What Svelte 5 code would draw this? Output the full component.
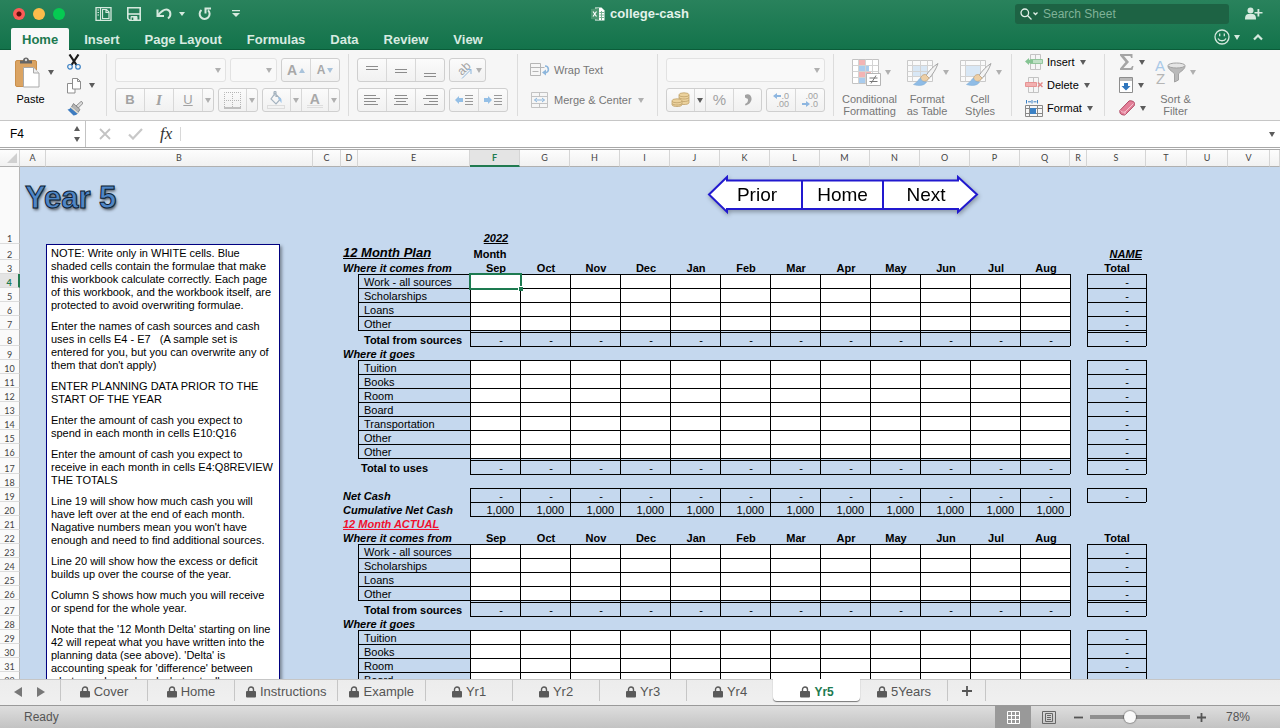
<script lang="ts">
  type Row = {
    n: number;
    kind: 'year' | 'title' | 'months' | 'item' | 'total' | 'heading' | 'blank' | 'net' | 'cumulative' | 'actual';
    label?: string;
  };

  const months = ['Sep', 'Oct', 'Nov', 'Dec', 'Jan', 'Feb', 'Mar', 'Apr', 'May', 'Jun', 'Jul', 'Aug'];
  const columns = 'ABCDEFGHIJKLMNOPQRSTUV'.split('');
  const widths = [26, 267, 28, 17, 112, 50, 50, 50, 50, 50, 50, 50, 50, 50, 50, 50, 50, 17, 59, 41, 41, 42];
  const ribbonTabs = ['Home', 'Insert', 'Page Layout', 'Formulas', 'Data', 'Review', 'View'];
  const sheets = ['Cover', 'Home', 'Instructions', 'Example', 'Yr1', 'Yr2', 'Yr3', 'Yr4', 'Yr5', '5Years'];

  const rows: Row[] = [
    { n: 1, kind: 'year' },
    { n: 2, kind: 'title', label: '12 Month Plan' },
    { n: 3, kind: 'months', label: 'Where it comes from' },
    { n: 4, kind: 'item', label: 'Work - all sources' },
    { n: 5, kind: 'item', label: 'Scholarships' },
    { n: 6, kind: 'item', label: 'Loans' },
    { n: 7, kind: 'item', label: 'Other' },
    { n: 8, kind: 'total', label: 'Total from sources' },
    { n: 9, kind: 'heading', label: 'Where it goes' },
    { n: 10, kind: 'item', label: 'Tuition' },
    { n: 11, kind: 'item', label: 'Books' },
    { n: 12, kind: 'item', label: 'Room' },
    { n: 13, kind: 'item', label: 'Board' },
    { n: 14, kind: 'item', label: 'Transportation' },
    { n: 15, kind: 'item', label: 'Other' },
    { n: 16, kind: 'item', label: 'Other' },
    { n: 17, kind: 'total', label: 'Total to uses' },
    { n: 18, kind: 'blank' },
    { n: 19, kind: 'net', label: 'Net Cash' },
    { n: 20, kind: 'cumulative', label: 'Cumulative Net Cash' },
    { n: 21, kind: 'actual', label: '12 Month ACTUAL' },
    { n: 22, kind: 'months', label: 'Where it comes from' },
    { n: 23, kind: 'item', label: 'Work - all sources' },
    { n: 24, kind: 'item', label: 'Scholarships' },
    { n: 25, kind: 'item', label: 'Loans' },
    { n: 26, kind: 'item', label: 'Other' },
    { n: 27, kind: 'total', label: 'Total from sources' },
    { n: 28, kind: 'heading', label: 'Where it goes' },
    { n: 29, kind: 'item', label: 'Tuition' },
    { n: 30, kind: 'item', label: 'Books' },
    { n: 31, kind: 'item', label: 'Room' },
    { n: 32, kind: 'item', label: 'Board' }
  ];

  const notes = [
    'NOTE: Write only in WHITE cells. Blue\nshaded cells contain the formulae that make\nthis workbook calculate correctly. Each page\nof this workbook, and the workbook itself, are\nprotected to avoid overwriting formulae.',
    "Enter the names of cash sources and cash\nuses in cells E4 - E7   (A sample set is\nentered for you, but you can overwrite any of\nthem that don't apply)",
    'ENTER PLANNING DATA PRIOR TO THE\nSTART OF THE YEAR',
    'Enter the amount of cash you expect to\nspend in each month in cells E10:Q16',
    'Enter the amount of cash you expect to\nreceive in each month in cells E4:Q8REVIEW\nTHE TOTALS',
    "Line 19 will show how much cash you will\nhave left over at the end of each month.\nNagative numbers mean you won't have\nenough and need to find additional sources.",
    'Line 20 will show how the excess or deficit\nbuilds up over the course of the year.',
    'Column S shows how much you will receive\nor spend for the whole year.',
    "Note that the '12 Month Delta' starting on line\n42 will repeat what you have written into the\nplanning data (see above). 'Delta' is\naccounting speak for 'difference' between\nwhat you planned and what actually"
  ];

  let activeTab = $state('Home');
  let activeSheet = $state('Yr5');
  let zoom = $state(78);

  const boxed = (kind?: string) => ['item', 'total', 'net', 'cumulative'].includes(kind ?? '');
  const totalBoxed = (kind?: string) => ['item', 'total', 'net'].includes(kind ?? '');

  function cellValue(kind: string, month: number) {
    if (kind === 'year') return month === 0 ? '2022' : '';
    if (kind === 'title') return month === 0 ? 'Month' : '';
    if (kind === 'months') return months[month];
    if (kind === 'total' || kind === 'net') return '-';
    if (kind === 'cumulative') return '1,000';
    return '';
  }
</script>

{#snippet caret(dark = false)}
  <i class="caret" class:dark></i>
{/snippet}

{#snippet lines(widths: number[], align: string, top: number)}
  <svg width="16" height="14" viewBox="0 0 16 14" stroke="#8c8c8c">
    {#each widths as w, i}
      {@const x = align === 'left' ? 0 : align === 'right' ? 16 - w : (16 - w) / 2}
      <path d="M{x} {top + i * 3 + 0.5}h{w}" />
    {/each}
  </svg>
{/snippet}

{#snippet lock()}
  <svg width="10" height="12" viewBox="0 0 10 12">
    <path d="M2.5 6V3.5a2.5 2.5 0 0 1 5 0V6" fill="none" stroke="#5a5a5a" stroke-width="1.4" />
    <rect y="5" width="10" height="6.5" rx="1" fill="#5a5a5a" />
  </svg>
{/snippet}

{#snippet brush()}
  <path d="M32 5.500c-5 3-9 7.500-12 12l3 3c3.500-4 7-9 9-15z" fill="#f4f4f4" stroke="#a5a5a5" />
  <path d="M19.500 16.500c-3.500 0-5.500 2.500-5 6 3 2 7 .500 8.500-2.500z" fill="#edcfa6" stroke="#c9ad88" />
  <path d="M14.500 20c-2 1-2.500 4-7 6.500 5 1.500 11 1.500 13-2.500-2.500 0-5.500-1-6-4z" fill="#8fbce6" stroke="#82aed6" stroke-width=".6" />
{/snippet}

<div class="window">
  <header>
    <div class="titlebar">
      <div class="left-tools">
        <div class="lights">
          <button class="close" aria-label="Close"></button>
          <button class="minimise" aria-label="Minimise"></button>
          <button class="maximise" aria-label="Zoom window"></button>
        </div>
        <div class="quick">
          <button aria-label="File gallery">
            <svg width="17" height="14" viewBox="0 0 17 14" fill="none" stroke="#d5e9de">
              <path d="M1 .7h15v12.600H1z" stroke-width="1.300" />
              <path d="M5.500 1v12" />
              <path d="M2.500 3h1.500M2.500 5.500h1.500M2.500 8h1.500" stroke-width="1.200" />
              <path d="M7.500 2.500h4l2.500 2.500v6.500H7.500zM11 2.500v3h3" stroke-width="1.200" />
            </svg>
          </button>
          <button aria-label="Save">
            <svg width="14" height="14" viewBox="0 0 14 14" fill="none" stroke="#d5e9de" stroke-width="1.600">
              <path d="M.8.8h12.400v12.400H2.500L.8 11.500z" />
              <path d="M1 7h12" />
              <path d="M4 13V9.500h6V13" fill="#d5e9de" stroke-width="1" />
              <path d="M5.500 10.500V13" stroke="#1e7b50" />
            </svg>
          </button>
          <button class="undo" aria-label="Undo">
            <svg width="16" height="14" viewBox="0 0 16 14" fill="none" stroke="#d5e9de" stroke-width="2">
              <path d="M1.500 2.500v6.500h6.500M2 8.500C6 3.500 9 2 11.500 2.800c3.500 1.200 4 6 .5 8.700" />
            </svg>
            <i class="caret pale"></i>
          </button>
          <button aria-label="Redo">
            <svg width="14" height="14" viewBox="0 0 14 14" fill="none" stroke="#d5e9de" stroke-width="2">
              <path d="M3.500 3a5 5 0 1 0 6.500.2M7.500 6.500V1.500H13" />
            </svg>
          </button>
          <button aria-label="Customise toolbar">
            <svg width="8" height="9" viewBox="0 0 8 9" fill="#d5e9de"><path d="M0 1h8v1.300H0zM0 4h8L4 8z" /></svg>
          </button>
        </div>
      </div>
      <div class="document">
        <svg width="14" height="14" viewBox="0 0 14 14">
          <path d="M4 .5h6.500l3 3v10H4z" fill="#fff" />
          <path d="M8.500 5.500H13M8.500 8H13M8.500 10.500H13M10.500 4v9" stroke="#79b394" />
          <path d="M0 2l8-1v12l-8-1z" fill="#4b9670" />
          <path d="M2 4.500l3.500 5M5.500 4.500L2 9.500" stroke="#fff" stroke-width="1.200" />
        </svg>
        <span>college-cash</span>
      </div>
      <div class="tools">
        <label class="search">
          <svg width="19" height="12" viewBox="0 0 19 12" fill="none" stroke="#e3f0e9" stroke-width="1.300">
            <circle cx="4.800" cy="4.800" r="3.800" />
            <path d="M7.500 7.500l4 4M13.500 4.500l2 2 2-2" />
          </svg>
          <input type="search" placeholder="Search Sheet" aria-label="Search sheet" />
        </label>
        <button class="share" aria-label="Share">
          <svg width="18" height="13" viewBox="0 0 18 13" fill="#d5e9de">
            <circle cx="5.500" cy="3.500" r="3" />
            <path d="M0 12.500c0-4 1-5 3-5.500h5c2 .5 3 1.500 3 5.500zM12.500 2h1.800v3H17.500v1.600h-3.200v3h-1.800v-3H9.500V5h3z" />
          </svg>
        </button>
      </div>
    </div>
    <div class="ribbon-tabs">
      {#each ribbonTabs as tab}
        <button class:active={tab === activeTab} onclick={() => (activeTab = tab)}>{tab}</button>
      {/each}
      <div class="feedback">
        <button aria-label="Feedback">
          <svg width="16" height="16" viewBox="0 0 16 16" fill="none" stroke="#d5e9de" stroke-width="1.300">
            <circle cx="8" cy="8" r="7" />
            <path d="M5.700 4.500v2.700M10.300 4.500v2.700M4 9.500c1.500 3 6.500 3 8 0" />
          </svg>
          <i class="caret pale"></i>
        </button>
        <button aria-label="Collapse ribbon">
          <svg width="10" height="7" viewBox="0 0 10 7" fill="none" stroke="#d5e9de" stroke-width="2.200"><path d="M1 5.500l4-4 4 4" /></svg>
        </button>
      </div>
    </div>
  </header>

  <div class="ribbon">
    <section class="clipboard">
      <button class="big paste">
        <span class="icon-row">
          <svg width="25" height="31" viewBox="0 0 25 31">
            <rect x=".5" y="3.500" width="21" height="26" rx="1.500" fill="#dba463" stroke="#c98f4c" />
            <path d="M5 3.500h3c0-4 6-4 6 0h3v3H5z" fill="#666" />
            <circle cx="11" cy="3" r="1.200" fill="#ddd" />
            <path d="M8.500 10.500h10l5.500 5.500v14H8.500z" fill="#fff" stroke="#a9a9a9" />
            <path d="M18.500 10.500V16H24" fill="#eee" stroke="#a9a9a9" />
          </svg>
          {@render caret(true)}
        </span>
        <span class="black">Paste</span>
      </button>
      <div class="stack">
        <button aria-label="Cut">
          <svg width="14" height="16" viewBox="0 0 14 16" fill="none">
            <path d="M2.500.5L9.500 11M11.500.5L4.500 11" stroke="#1c1c1c" stroke-width="2.200" />
            <circle cx="3" cy="12.800" r="2.300" stroke="#3a80c4" stroke-width="1.200" />
            <circle cx="11" cy="12.800" r="2.300" stroke="#3a80c4" stroke-width="1.200" />
          </svg>
        </button>
        <button class="copy" aria-label="Copy">
          <svg width="14" height="16" viewBox="0 0 14 16" fill="#fff" stroke="#8d8d8d">
            <path d="M.5 5.500h5l2.500 2.500v7H.5z" />
            <path d="M5.500.5h5l3 3v7.500h-8zM10.500.5v3h3" />
          </svg>
          {@render caret(true)}
        </button>
        <button aria-label="Format painter">
          <svg width="16" height="15" viewBox="0 0 16 15">
            <path d="M14 .5c1.500 0 2 1.500 1.300 2.500l-4 4-2.300-2z" fill="#ddd" stroke="#777" stroke-width=".8" />
            <path d="M6.500 2.500l6.500 6-2 3L4.500 6z" fill="#b5b5b5" stroke="#777" stroke-width=".8" />
            <path d="M4.500 5.500l7 6c-1 2-3 3-5 3L.500 8.500C2 8.500 3.500 7.500 4.500 5.500z" fill="#3e7cc0" />
            <path d="M4.500 5.500l7 6-1 1.200-7-6z" fill="#e8ddc8" />
          </svg>
        </button>
      </div>
    </section>

    <section class="controls font">
      <div class="line">
        <span class="combo wide"><select disabled aria-label="Font"><option></option></select>{@render caret()}</span>
        <span class="combo narrow"><select disabled aria-label="Font size"><option></option></select>{@render caret()}</span>
        <div class="set w59">
          <button disabled aria-label="Grow font"><b class="grow">A</b><i class="up blue"></i></button>
          <button disabled aria-label="Shrink font"><b class="shrink">A</b><i class="caret blue"></i></button>
        </div>
      </div>
      <div class="line">
        <div class="set biu">
          <button disabled><b>B</b></button>
          <button disabled><em>I</em></button>
          <button disabled><u>U</u></button>
          <button class="drop" disabled aria-label="Underline style">{@render caret()}</button>
        </div>
        <div class="set w40">
          <button disabled aria-label="Borders">
            <svg width="17" height="17" viewBox="0 0 17 17" fill="none" stroke="#b5b5b5">
              <path d="M.5 15V.5h16V15M8.500 0v15M0 8.500h17" stroke-dasharray="1 1" />
              <path d="M0 16h17" stroke="#8c8c8c" />
            </svg>
          </button>
          <button class="drop" disabled aria-label="Border style">{@render caret()}</button>
        </div>
        <div class="set w78">
          <button disabled aria-label="Fill colour">
            <svg width="18" height="18" viewBox="0 0 18 18" fill="none">
              <path d="M8 2.500l5.500 5.500-4.500 5-5-5zM7 5V1.500c0-1.500 2-1.500 2 0V6" stroke="#a5b3bf" stroke-width="1.200" />
              <path d="M12 6c2 1 3 2 2.500 6-1.500-1-1-3-3.500-4z" fill="#9cc3e8" />
              <rect x=".5" y="14.500" width="17" height="3" stroke="#ddd" />
            </svg>
          </button>
          <button class="drop" disabled aria-label="Fill colours">{@render caret()}</button>
          <button disabled aria-label="Font colour"><b class="colour">A</b></button>
          <button class="drop" disabled aria-label="Font colours">{@render caret()}</button>
        </div>
      </div>
    </section>

    <section class="controls align">
      <div class="line">
        <div class="set w88">
          <button disabled aria-label="Align top">{@render lines([12, 12], 'centre', 3)}</button>
          <button disabled aria-label="Align middle">{@render lines([12, 12], 'centre', 6)}</button>
          <button disabled aria-label="Align bottom">{@render lines([12, 12], 'centre', 10)}</button>
        </div>
        <div class="set w38">
          <button disabled aria-label="Orientation">
            <svg width="20" height="20" viewBox="0 0 20 20">
              <text transform="translate(8 16) rotate(-45)" class="ab">ab</text>
              <path d="M8 18.500l9-9M12.500 9.500H17V14" fill="none" stroke="#8db6dc" />
            </svg>
            {@render caret()}
          </button>
        </div>
      </div>
      <div class="line">
        <div class="set w88">
          <button disabled aria-label="Align left">{@render lines([12, 16, 12, 14], 'left', 2)}</button>
          <button disabled aria-label="Centre">{@render lines([12, 14, 10, 14], 'centre', 2)}</button>
          <button disabled aria-label="Align right">{@render lines([12, 15, 9, 14], 'right', 2)}</button>
        </div>
        <div class="set w59">
          {#each ['left', 'right'] as side}
            <button disabled aria-label={side === 'left' ? 'Decrease indent' : 'Increase indent'}>
              <svg width="18" height="12" viewBox="0 0 18 12">
                <path d={side === 'left' ? 'M0 6l4-4v2h4v4H4v2z' : 'M8 6L4 2v2H0v4h4v2z'} fill="#94bfe6" />
                <path d="M10 1.500h8M10 4.500h8M10 7.500h8M10 10.500h8" stroke="#999" />
              </svg>
            </button>
          {/each}
        </div>
      </div>
    </section>

    <section class="wrap">
      <button disabled>
        <svg width="20" height="14" viewBox="0 0 20 14" fill="none" stroke="#b5b5b5">
          <path d="M.5.5h10v12H.5zM.5 4.500h14M2.500 8.500h6" />
          <path d="M15 3c4 0 5 6 0 7" stroke="#8db6dc" stroke-width="1.600" />
          <path d="M12 9.500l4-3v6z" fill="#8db6dc" stroke="none" />
        </svg>
        Wrap Text
      </button>
      <button disabled>
        <svg width="20" height="16" viewBox="0 0 20 16" fill="none" stroke="#c3c3c3">
          <path d="M1.500.5h16v15h-16zM1.500 4.500h16M1.500 11.500h16M9.500 0v4.500M9.500 11.500V16" />
          <path d="M4.500 8h10M7 6L4.500 8 7 10M12 6l2.500 2L12 10" stroke="#8db6dc" />
        </svg>
        Merge &amp; Center
        {@render caret()}
      </button>
    </section>

    <section class="controls number">
      <div class="line">
        <span class="combo format"><select disabled aria-label="Number format"><option></option></select>{@render caret()}</span>
      </div>
      <div class="line">
        <div class="set w96">
          <button disabled aria-label="Currency">
            <svg width="19" height="16" viewBox="0 0 19 16" fill="#ecd29d" stroke="#bfa169" stroke-width=".8">
              <path d="M8 3v8c1 2 9 2 10 0V3" /><path d="M8 8c1 2 9 2 10 0M8 5.500c1 2 9 2 10 0" fill="none" />
              <ellipse cx="13" cy="2.800" rx="5" ry="2" />
              <path d="M1 9v4c1 2 9 2 10 0V9" /><path d="M1 11.500c1 2 9 2 10 0" fill="none" />
              <ellipse cx="6" cy="8.800" rx="5" ry="2" />
            </svg>
          </button>
          <button class="drop" aria-label="Currencies">{@render caret(true)}</button>
          <button disabled class="percent">%</button>
          <button disabled aria-label="Comma style">
            <svg width="8" height="12" viewBox="0 0 8 12"><path d="M1 1c4-2 7 1 6.500 4.500C7 9 4 11 1.500 11.500L1 10c2-.8 3-2 3-4C4 4 2 4.500 1 3.500z" fill="#a2a2a2" /></svg>
          </button>
        </div>
        <div class="set w59 decimals">
          <button disabled><span><svg width="8" height="6" viewBox="0 0 8 6"><path d="M0 3l4-3v2h4v2H4v2z" fill="#8db6e0" /></svg>.0</span><span>.00</span></button>
          <button disabled><span>.00</span><span><svg width="8" height="6" viewBox="0 0 8 6"><path d="M8 3L4 0v2H0v2h4v2z" fill="#8db6e0" /></svg>.0</span></button>
        </div>
      </div>
    </section>

    <section class="styles">
      <button class="big" disabled>
        <span class="icon-row">
          <svg width="32" height="29" viewBox="0 0 32 29" fill="none">
            <path d="M3.500 1.500h26v24h-26z" fill="#fff" stroke="#c3c3c3" />
            <path d="M10 2h6v5h-6zM10 13.500h12v6H10z" fill="#f3b4b4" />
            <path d="M10 7.500h10v5.500H10zM10 20h6v5h-6z" fill="#a9ccee" />
            <path d="M9.500 1.500v24M16.500 1.500v24M23.500 1.500v24M3.500 7.500h26M3.500 13.500h26M3.500 19.500h26" stroke="#d3d3d3" />
            <path d="M17.500 15.500h14v12h-14z" fill="#fff" stroke="#b5b5b5" />
            <path d="M20.500 20h8M20.500 23.500h8M27 17.500l-5 8" stroke="#777" />
          </svg>
          {@render caret()}
        </span>
        <span>Conditional<br />Formatting</span>
      </button>
      {#each ['Format\nas Table', 'Cell\nStyles'] as label}
        <button class="big" disabled>
          <span class="icon-row">
            <svg width="33" height="29" viewBox="0 0 33 29" fill="none">
              <path d="M1.500 2.500h25v21h-25z" fill="#fafafa" stroke="#c9c9c9" />
              <path d="M7 7.500h15V19H7z" fill="#d8e7f5" />
              <path d="M6.500 2.500v21M21.500 2.500v21M1.500 7.500h25M1.500 18.500h25" stroke="#d3d3d3" />
              {#if label.startsWith('Format')}<path d="M14.500 2.500v21M1.500 13.500h25" stroke="#d3d3d3" />{/if}
              {@render brush()}
            </svg>
            {@render caret()}
          </span>
          <span class="pre">{label}</span>
        </button>
      {/each}
    </section>

    <section class="cells">
      <button>
        <svg width="18" height="16" viewBox="0 0 18 16" fill="none">
          <path d="M5.500.5h10v15h-10zM10.500 0v16" stroke="#c3c3c3" />
          <path d="M5 5.500h12.500v4H5z" fill="#bfe0c5" stroke="#93c69c" />
          <path d="M0 7.500l4-3.500v2h4v3H4v2z" fill="#86c493" />
        </svg>
        Insert {@render caret(true)}
      </button>
      <button>
        <svg width="18" height="16" viewBox="0 0 18 16" fill="none">
          <path d="M3.500.5h10v15h-10zM8.500 0v16" stroke="#c3c3c3" />
          <path d="M.5 5.500h11v4H.5z" fill="#f2b0b0" stroke="#e79393" />
          <path d="M13 5.500l4.500 4.500M17.500 5.500L13 10" stroke="#e38888" stroke-width="1.500" />
        </svg>
        Delete {@render caret(true)}
      </button>
      <button>
        <svg width="18" height="17" viewBox="0 0 18 17" fill="none">
          <path d="M.5 5.500h17v11H.5zM.5 8.500h17M.5 13.500h17M4.500 5.500v11M12.500 5.500v11" stroke="#888" />
          <path d="M5 8h6v6H5z" fill="#3a80c4" />
          <path d="M1.500 0v3.500M12.500 0v3.500M7 0v3.500" stroke="#3a80c4" />
          <path d="M3 1.800h3M8.500 1.800h3" stroke="#3a80c4" />
        </svg>
        Format {@render caret(true)}
      </button>
    </section>

    <section class="editing">
      <div class="stack">
        <button aria-label="AutoSum">
          <svg width="15" height="16" viewBox="0 0 15 16"><path d="M1 0h12.500v4H12c0-1.500-.5-2-2-2H5l5 6-5.500 6H10.500c1.500 0 2-.5 2.500-2h1.500l-1 4H1v-1.500L6.500 8 1 1.500z" fill="#a5a5a5" /></svg>
          {@render caret(true)}
        </button>
        <button aria-label="Fill">
          <svg width="14" height="16" viewBox="0 0 14 16"><path d="M.5.500h13v15H.5z" fill="#fff" stroke="#8d8d8d" /><path d="M1 1h12v3H1z" fill="#bbb" /><path d="M5 6h4v3h2.500L7 13.500 2.500 9H5z" fill="#2f76bd" /></svg>
          {@render caret(true)}
        </button>
        <button aria-label="Clear">
          <svg width="16" height="16" viewBox="0 0 16 16" stroke="#b04a66"><path d="M.8 10.500L10 1c1-.6 4.500 0 5.300 1.500v3L6 15c-2 .3-4.500-.7-5-2z" fill="#e47f98" /><path d="M1.500 10.500c1 1.500 3 2 4.500 1.500L14.500 3.500M6 12v2.500" fill="none" stroke="#f5c3cf" /></svg>
          {@render caret(true)}
        </button>
      </div>
      <button class="big" disabled>
        <span class="icon-row">
          <svg width="31" height="29" viewBox="0 0 31 29">
            <text x="0" y="13" class="sort-a">A</text>
            <text x="1" y="26" class="sort-z">Z</text>
            <path d="M13 8c0 4 6 6 6.500 8v8l4-2v-6c.5-2 6.500-4 6.500-8z" fill="#b9b9b9" stroke="#a2a2a2" />
            <ellipse cx="21.500" cy="7.500" rx="8.500" ry="2.500" fill="#e5e5e5" stroke="#a2a2a2" />
          </svg>
          {@render caret()}
        </span>
        <span>Sort &amp;<br />Filter</span>
      </button>
    </section>
  </div>

  <div class="formula-bar">
    <div class="name-box">
      <input value="F4" aria-label="Name box" />
      <span class="spin"><i class="up"></i><i class="caret dark"></i></span>
    </div>
    <button disabled aria-label="Cancel">
      <svg width="12" height="12" viewBox="0 0 12 12" fill="none" stroke="#c3c3c3" stroke-width="1.800"><path d="M1 1l10 10M11 1L1 11" /></svg>
    </button>
    <button disabled aria-label="Enter">
      <svg width="15" height="12" viewBox="0 0 15 12" fill="none" stroke="#c8c8c8" stroke-width="2.200"><path d="M1 6.500L5 10.500 14 1" /></svg>
    </button>
    <button class="fx" aria-label="Insert function">fx</button>
    <input class="formula" aria-label="Formula" />
    <button class="expand" aria-label="Expand formula bar">{@render caret(true)}</button>
  </div>

  <main>
    <table>
      <colgroup>
        <col style="width: 20px" />
        {#each widths as w}<col style="width: {w}px" />{/each}
        <col />
      </colgroup>
      <thead>
        <tr>
          <th class="corner"><svg width="10" height="10" viewBox="0 0 10 10"><path d="M10 0v10H0z" fill="#d0d0d0" /></svg></th>
          {#each columns as column}
            <th class:current={column === 'F'}>{column}</th>
          {/each}
          <th></th>
        </tr>
      </thead>
      <tbody>
        {#each rows as row, i}
          {@const above = rows[i - 1]?.kind}
          <tr class={row.kind}>
            <th class:current={row.n === 4}>{row.n}</th>
            <td></td>
            <td></td>
            <td></td>
            {#if row.kind === 'item' || row.kind === 'total'}
              <td></td>
              <td
                class="label"
                class:left={row.kind === 'item'}
                class:top={row.kind === 'item' || above === 'item'}
                class:outdent={row.n === 17}>{row.label}</td
              >
            {:else}
              <td class="label" colspan="2">{row.label}</td>
            {/if}
            {#each months as _, m}
              <td class="month" class:left={boxed(row.kind)} class:top={boxed(row.kind) || boxed(above)}
                >{cellValue(row.kind, m)}{#if row.n === 4 && m === 0}<span class="selection"></span>{/if}</td
              >
            {/each}
            <td class:left={boxed(row.kind)}></td>
            <td class="sum" class:left={totalBoxed(row.kind)} class:top={totalBoxed(row.kind) || totalBoxed(above)}
              >{#if row.kind === 'title'}NAME{:else if row.kind === 'months'}Total{:else if totalBoxed(row.kind)}-{/if}</td
            >
            <td class:left={totalBoxed(row.kind)}></td>
            <td></td>
            <td></td>
            <td></td>
          </tr>
        {/each}
      </tbody>
    </table>

    <h1>Year 5</h1>

    <nav class="arrows">
      <svg width="272" height="42" viewBox="0 0 272 42" fill="#fff" stroke="#2119cf" stroke-width="2">
        <path d="M2 19.500L20 2v3.500h231V2l19 17.500L251 37V34H20v3zM95 5.500V34M176 5.500V34" />
      </svg>
      <a href="#prior">Prior</a>
      <a href="#home">Home</a>
      <a href="#next">Next</a>
    </nav>

    <aside>
      {#each notes as note}
        <p>{note}</p>
      {/each}
    </aside>
  </main>

  <footer class="sheet-tabs">
    <div class="scroll">
      <button aria-label="Previous sheet"><svg width="8" height="10" viewBox="0 0 8 10"><path d="M8 0v10L0 5z" fill="#777" /></svg></button>
      <button aria-label="Next sheet"><svg width="8" height="10" viewBox="0 0 8 10"><path d="M0 0v10l8-5z" fill="#777" /></svg></button>
    </div>
    {#each sheets as sheet}
      <button class="sheet" class:active={sheet === activeSheet} onclick={() => (activeSheet = sheet)}>
        {@render lock()}{sheet}
      </button>
    {/each}
    <button class="add" aria-label="Add sheet">
      <svg width="10" height="10" viewBox="0 0 10 10" stroke="#555" stroke-width="1.800"><path d="M5 0v10M0 5h10" /></svg>
    </button>
  </footer>

  <div class="status">
    <span class="ready">Ready</span>
    <button class="view active" aria-label="Normal view">
      <svg width="13" height="13" viewBox="0 0 13 13" fill="none" stroke="#fff"><path d="M.5.5h12v12H.5zM4.500.5v12M8.500.5v12M.5 4.500h12M.5 8.500h12" /></svg>
    </button>
    <button class="view" aria-label="Page layout view">
      <svg width="14" height="13" viewBox="0 0 14 13" fill="none" stroke="#666"><path d="M.5.500h13v12H.5zM3.500 2.500h7v8h-7zM5 4.500h4M5 6.500h4M5 8.500h4" /></svg>
    </button>
    <button class="step" aria-label="Zoom out"><svg width="9" height="9" viewBox="0 0 9 9" stroke="#555" stroke-width="1.800"><path d="M0 4.500h9" /></svg></button>
    <input type="range" min="0" max="200" bind:value={zoom} aria-label="Zoom" />
    <button class="step" aria-label="Zoom in"><svg width="9" height="9" viewBox="0 0 9 9" stroke="#555" stroke-width="1.800"><path d="M0 4.500h9M4.500 0v9" /></svg></button>
    <span class="percentage">{zoom}%</span>
  </div>
</div>

<style>
  :global(body) {
    margin: 0;
  }

  .window {
    display: flex;
    flex-direction: column;
    height: 100vh;
    overflow: hidden;
    font-family: 'Liberation Sans', Arial, sans-serif;
    font-size: 11px;
    line-height: 12px;
    color: #000;
  }

  button,
  input,
  select {
    margin: 0;
    padding: 0;
    border: 0;
    background: none;
    font: inherit;
    color: inherit;
    outline: none;
  }

  svg {
    display: block;
    flex: none;
  }

  .caret,
  .up {
    flex: none;
    width: 0;
    height: 0;
    border: 3px solid transparent;
    border-top: 5px solid #b0b0b0;
    border-bottom: 0;
  }
  .caret.dark {
    border-top-color: #5c5c5c;
  }
  .caret.pale {
    border-top-color: #d5e9de;
  }
  .up {
    border-top: 0;
    border-bottom: 5px solid #5c5c5c;
  }
  .up.blue {
    border-bottom-color: #a9c3db;
  }
  .caret.blue {
    border-top-color: #a9c3db;
  }

  header {
    flex: none;
    height: 49px;
    background: linear-gradient(#29825c, #13734b);
    border-bottom: 1px solid #0b5c39;
  }

  .titlebar {
    display: grid;
    grid-template-columns: 1fr auto 1fr;
    align-items: center;
    height: 27px;
  }
  .left-tools {
    display: flex;
    align-items: center;
  }
  .lights {
    display: flex;
    gap: 8px;
    width: 82px;
    padding-left: 13px;
  }
  .lights button {
    width: 12px;
    height: 12px;
    border-radius: 50%;
    background: #fdbc4b;
  }
  .lights .close {
    background: radial-gradient(circle, #5d0f0b 2px, #fc5b57 3px);
  }
  .lights .maximise {
    background: #06ca52;
  }
  .quick {
    display: flex;
    align-items: center;
    gap: 15px;
  }
  .quick button,
  .feedback button {
    display: flex;
    align-items: center;
    gap: 7px;
  }
  .quick .undo {
    margin-right: -2px;
  }
  .quick .caret {
    border-width: 4px 3px 0;
  }
  .quick button:last-child {
    margin-left: 5px;
  }
  .document {
    display: flex;
    align-items: center;
    gap: 5px;
    font-size: 13px;
    font-weight: bold;
    color: #e3f2ea;
  }
  .tools {
    display: flex;
    align-items: center;
    justify-content: flex-end;
    gap: 16px;
    padding-right: 17px;
  }
  .search {
    display: flex;
    align-items: center;
    gap: 4px;
    box-sizing: border-box;
    width: 214px;
    height: 20px;
    padding-left: 5px;
    border-radius: 3px;
    background: #1d6344;
  }
  .search input {
    flex: 1;
    min-width: 0;
    font-size: 12px;
    color: #fff;
  }
  .search input::placeholder {
    color: #7fb298;
    opacity: 1;
  }

  .ribbon-tabs {
    display: flex;
    gap: 1px;
    box-sizing: border-box;
    height: 23px;
    padding: 1px 17px 0 11px;
  }
  .ribbon-tabs > button {
    padding: 2px 12px 0;
    font-size: 13px;
    font-weight: bold;
    color: #d8ebe1;
  }
  .ribbon-tabs > button.active {
    height: 23px;
    margin-right: 2px;
    padding: 1px 11px 0;
    color: #1d7a50;
    background: #f8f8f8;
    border-radius: 2px 2px 0 0;
  }
  .feedback {
    display: flex;
    align-items: center;
    gap: 13px;
    height: 18px;
    margin-left: auto;
  }
  .feedback button {
    gap: 4px;
  }

  .ribbon {
    display: flex;
    flex: none;
    height: 70px;
    border-bottom: 1px solid #c6c6c6;
    background: #f6f6f6;
    color: #777;
  }
  .ribbon section {
    display: flex;
    box-sizing: border-box;
    height: 62px;
    margin-top: 4px;
    border-right: 1px solid #dcdcdc;
  }
  .ribbon section:last-child {
    border-right: 0;
  }
  .ribbon button {
    display: flex;
    align-items: center;
    justify-content: center;
  }

  .ribbon .big {
    flex-direction: column;
    justify-content: flex-start;
    gap: 6px;
    line-height: 12px;
  }
  .icon-row {
    display: flex;
    align-items: center;
    gap: 4px;
    padding-top: 4px;
    height: 29px;
  }
  .pre {
    white-space: pre;
  }
  .black {
    color: #000;
  }

  .clipboard {
    width: 107px;
    padding-left: 15px;
    gap: 13px;
  }
  .paste .icon-row {
    gap: 8px;
  }
  .paste .black {
    margin-right: 8px;
  }
  .stack {
    display: flex;
    flex-direction: column;
    align-items: flex-start;
    justify-content: space-between;
  }
  .clipboard .copy {
    gap: 8px;
  }

  .controls {
    flex-direction: column;
    gap: 6px;
    padding: 4px 8px 0;
  }
  .line {
    display: flex;
    gap: 4px;
  }
  .font {
    width: 242px;
  }
  .align {
    width: 169px;
  }
  .number {
    width: 176px;
  }
  .combo {
    display: flex;
    align-items: center;
    box-sizing: border-box;
    height: 24px;
    padding-right: 4px;
    border: 1px solid #e2e2e2;
    border-radius: 3px;
    background: #f9f9f9;
  }
  .combo select {
    flex: 1;
    min-width: 0;
    appearance: none;
  }
  .combo.wide {
    width: 111px;
  }
  .combo.narrow {
    width: 47px;
  }
  .combo.format {
    width: 159px;
  }
  .set {
    display: flex;
    box-sizing: border-box;
    height: 24px;
    border: 1px solid #cfcfcf;
    border-radius: 3px;
    background: linear-gradient(#fbfbfb, #f1f1f1);
  }
  .set button {
    flex: 1;
    gap: 2px;
    color: #a2a2a2;
  }
  .set button + button {
    border-left: 1px solid #d8d8d8;
  }
  .set .drop {
    flex: none;
    width: 11px;
  }
  .w59 {
    width: 59px;
  }
  .w40 {
    width: 40px;
  }
  .w78 {
    width: 78px;
  }
  .w88 {
    width: 88px;
  }
  .w38 {
    width: 37px;
  }
  .w96 {
    width: 96px;
  }
  .biu {
    width: 99px;
    font-size: 13px;
  }
  .biu em {
    font-family: 'Liberation Serif', serif;
    font-size: 15px;
    font-weight: bold;
  }
  .grow,
  .colour {
    font-size: 14px;
  }
  .shrink {
    font-size: 12px;
  }
  .grow,
  .shrink,
  .colour {
    color: #a8a8a8;
  }
  .colour {
    width: 16px;
    border-bottom: 3px double #ddd;
  }
  .percent {
    font-size: 15px;
  }
  .ab {
    font-size: 12px;
    fill: #a2a2a2;
  }
  .decimals button {
    flex-direction: column;
    align-items: flex-end;
    gap: 0;
    padding-right: 6px;
    font-size: 9px;
    line-height: 8px;
  }
  .decimals span {
    display: flex;
    align-items: center;
  }
  .sort-a,
  .sort-z {
    font-size: 15px;
    fill: #a9c9e8;
  }
  .sort-z {
    fill: #b5b5b5;
  }

  .wrap {
    flex-direction: column;
    gap: 16px;
    width: 140px;
    padding: 9px 0 0 12px;
  }
  .wrap button {
    justify-content: flex-start;
    gap: 4px;
    height: 14px;
  }
  .wrap .caret {
    margin-left: 2px;
  }

  .styles {
    width: 178px;
    padding-left: 8px;
    gap: 7px;
  }
  .styles .big + .big {
    width: 46px;
  }

  .ribbon .cells {
    flex-direction: column;
    justify-content: space-between;
    align-items: flex-start;
    width: 93px;
    padding-left: 13px;
    color: #000;
  }
  .cells button {
    gap: 4px;
    height: 16px;
  }
  .cells .caret {
    margin-left: 1px;
  }
  .editing {
    padding-left: 14px;
    gap: 9px;
  }
  .editing .stack button {
    gap: 5px;
  }

  .formula-bar {
    display: flex;
    flex: none;
    align-items: center;
    height: 26px;
    border-bottom: 3px double #a8a8a8;
    background: #fff;
    font-size: 12px;
  }
  .name-box {
    display: flex;
    align-items: center;
    box-sizing: border-box;
    width: 86px;
    height: 26px;
    margin-right: 13px;
    padding: 0 5px 0 10px;
    border-right: 1px solid #c3c3c3;
  }
  .name-box input {
    flex: 1;
    min-width: 0;
  }
  .spin {
    display: flex;
    flex-direction: column;
    gap: 6px;
  }
  .formula-bar button {
    display: flex;
    align-items: center;
  }
  .formula-bar button + button {
    margin-left: 17px;
  }
  .formula-bar .fx {
    height: 20px;
    font: italic 17px 'Liberation Serif', serif;
    color: #333;
  }
  .formula {
    flex: 1;
    min-width: 0;
    height: 14px;
    margin-left: 8px;
    border-left: 1px solid #d8d8d8;
  }
  .expand {
    margin-right: 5px;
  }

  main {
    position: relative;
    flex: 1;
    min-height: 0;
    overflow: hidden;
    background: #c5d8ee;
  }

  table {
    width: 100%;
    table-layout: fixed;
    border-collapse: separate;
    border-spacing: 0;
  }
  th,
  td {
    box-sizing: border-box;
    height: 14px;
    padding: 0;
    vertical-align: bottom;
    white-space: nowrap;
  }
  th {
    font: 9px/12px Lato, sans-serif;
    color: #444;
    background: #f7f7f7;
  }
  thead th {
    height: 17px;
    border-right: 1px solid #d5d5d5;
    border-bottom: 1px solid #b0b0b0;
    background: linear-gradient(#fdfdfd, #f1f1f1);
    vertical-align: middle;
  }
  thead .corner svg {
    margin-left: 7px;
  }
  thead .current {
    background: #e4e4e4;
    border-bottom: 2px solid #217a50;
    color: #217a50;
    font-weight: bold;
  }
  tbody th {
    border-right: 1px solid #b5b5b5;
    border-bottom: 1px solid #dcdcdc;
    line-height: 8px;
    background: #fafafa;
  }
  tbody .current {
    border-right: 2px solid #217a50;
    background: #e4e4e4;
    color: #217a50;
    font-weight: bold;
  }

  .left {
    border-left: 1px solid #000;
  }
  .top {
    border-top: 1px solid #000;
  }
  .label {
    padding-left: 2px;
    font-weight: bold;
    font-style: italic;
  }
  .month {
    position: relative;
    padding-left: 2px;
    text-align: center;
    font-weight: bold;
  }
  .sum {
    padding-left: 1px;
    text-align: center;
    font-weight: bold;
  }

  .year th,
  .year td {
    height: 77px;
  }
  .year .month {
    font-style: italic;
    text-decoration: underline;
  }
  .title th,
  .title td,
  .total th,
  .total td {
    height: 16px;
  }
  .title .label {
    font-size: 13px;
    line-height: 14px;
    text-decoration: underline;
  }
  .title .month {
    padding-right: 12px;
  }
  .title .sum {
    padding-right: 4px;
    text-align: right;
    font-style: italic;
    text-decoration: underline;
  }
  .item .label {
    padding-left: 5px;
    font-weight: normal;
    font-style: normal;
  }
  .item .month {
    background: #fff;
  }
  .total .label {
    padding-left: 6px;
    font-style: normal;
  }
  .total .label.outdent {
    padding-left: 3px;
  }
  .total .month,
  .total .sum {
    border-top: 3px double #000;
  }
  .item .sum,
  .total .month,
  .total .sum,
  .net .month,
  .net .sum {
    padding-right: 17px;
    text-align: right;
    font-weight: normal;
  }
  .cumulative .month {
    padding-right: 6px;
    text-align: right;
    font-weight: normal;
  }
  .actual .label {
    color: #f0102e;
    text-decoration: underline;
  }

  .selection {
    position: absolute;
    inset: -2px;
    z-index: 1;
    border: 2px solid #1d7a50;
  }
  .selection::after {
    content: '';
    position: absolute;
    right: -3px;
    bottom: -3px;
    width: 4px;
    height: 4px;
    border: 1px solid #fff;
    border-width: 1px 0 0 1px;
    background: #1d7a50;
  }

  h1 {
    position: absolute;
    top: 31px;
    left: 25px;
    margin: 0;
    font-size: 31px;
    line-height: 34px;
    color: #4f86c6;
    -webkit-text-stroke: 1px #0b1c33;
    text-shadow: 1px 2px 3px #000000a0;
  }

  .arrows {
    position: absolute;
    top: 25px;
    left: 707px;
    display: flex;
    width: 272px;
    height: 40px;
    font-size: 19px;
    line-height: 40px;
    filter: drop-shadow(1px 2px 2px #00000050);
  }
  .arrows svg {
    position: absolute;
    inset: 0;
  }
  .arrows a {
    position: relative;
    box-sizing: border-box;
    width: 81px;
    color: #000;
    text-decoration: none;
    text-align: center;
  }
  .arrows a:first-of-type {
    width: 95px;
    padding-left: 5px;
  }
  .arrows a:last-of-type {
    flex: 1;
    padding-right: 10px;
  }

  aside {
    position: absolute;
    top: 94px;
    left: 46px;
    box-sizing: border-box;
    width: 234px;
    padding: 2px 4px;
    border: 1px solid #000080;
    background: #fff;
    box-shadow: 2px 2px 3px #00000060;
    line-height: 13px;
    white-space: pre;
  }
  aside p {
    margin: 0 0 8px;
  }

  .sheet-tabs {
    display: flex;
    flex: none;
    box-sizing: border-box;
    height: 27px;
    padding-bottom: 4px;
    border-bottom: 1px solid #9a9a9a;
    background: linear-gradient(#ececec, #f0f0f0);
    box-shadow: inset 0 1px #c6c6c6;
    font-size: 13px;
    color: #555;
  }
  .scroll {
    display: flex;
    gap: 15px;
    box-sizing: border-box;
    width: 60px;
    padding: 3px 0 0 14px;
  }
  .sheet {
    display: flex;
    align-items: center;
    justify-content: center;
    gap: 4px;
    box-sizing: border-box;
    min-width: 87px;
    padding: 3px 11px 0;
    border-left: 1px solid #c6c6c6;
  }
  .sheet.active {
    border-left-color: transparent;
    border-radius: 0 0 4px 4px;
    background: #fff;
    box-shadow: 0 1px 1px #777;
    font-size: 12px;
    font-weight: bold;
    color: #1d7a50;
  }
  .sheet.active + .sheet {
    border-left-color: transparent;
  }
  .add {
    display: flex;
    align-items: center;
    justify-content: center;
    width: 39px;
    padding-top: 2px;
    border: 1px solid #c6c6c6;
    border-width: 0 1px;
  }

  .status {
    display: flex;
    flex: none;
    align-items: center;
    height: 22px;
    background: linear-gradient(#dedede, #c3c3c3);
    font-size: 12px;
    color: #555;
  }
  .ready {
    flex: 1;
    padding-left: 24px;
  }
  .view {
    display: flex;
    align-items: center;
    justify-content: center;
    width: 36px;
    height: 22px;
  }
  .view.active {
    background: #999;
  }
  .step {
    margin: 0 7px;
  }
  .status input {
    width: 100px;
    height: 12px;
    appearance: none;
    background: linear-gradient(#8f8f8f, #8f8f8f) center / 100% 4px no-repeat;
  }
  .status input::-webkit-slider-thumb {
    appearance: none;
    width: 12px;
    height: 12px;
    border-radius: 50%;
    background: #fafafa;
    box-shadow: 0 0 1px 1px #00000040;
  }
  .percentage {
    width: 54px;
    padding-left: 13px;
  }
</style>
